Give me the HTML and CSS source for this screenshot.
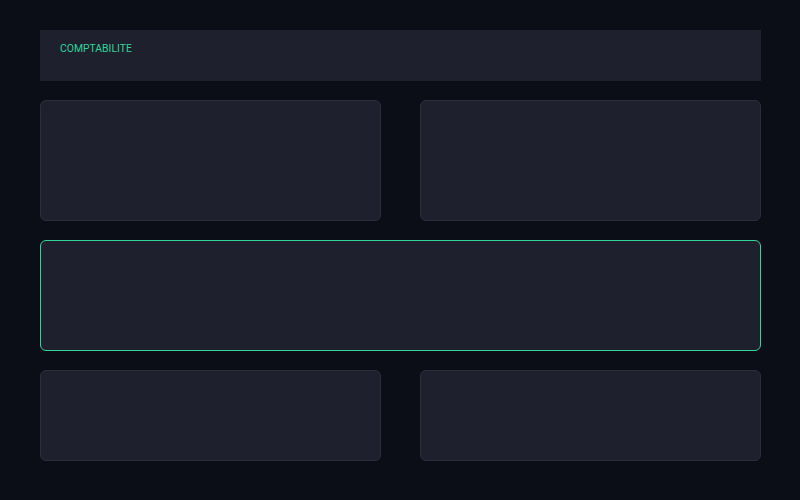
FILE: index.html
```html
<!DOCTYPE html>
<html lang="fr">
<head>
  <meta charset="UTF-8">
  <meta name="viewport" content="width=device-width, initial-scale=1.0">
  <title>Comptabilite</title>
  <link rel="stylesheet" href="styles.css">
</head>
<body>
  <div class="page">
    <header class="top-bar">
      <span class="section-title">COMPTABILITE</span>
    </header>
    <div class="grid-row row-tall">
      <div class="card"></div>
      <div class="card"></div>
    </div>
    <div class="card card-active row-mid"></div>
    <div class="grid-row row-short">
      <div class="card"></div>
      <div class="card"></div>
    </div>
  </div>
</body>
</html>
```
FILE: styles.css
```css
html, body {
  margin: 0;
  height: 100%;
}
body {
  background: #0b0e17;
  font-family: Roboto, "Liberation Sans", Arial, sans-serif;
  color: #e5e7eb;
}
.page {
  padding: 30px 39px 30px 40px;
  display: flex;
  flex-direction: column;
  gap: 19px;
}
.top-bar {
  height: 51px;
  background: #1e212d;
  padding: 13px 20px 0;
  box-sizing: border-box;
  display: flex;
  align-items: flex-start;
}
.section-title {
  font-size: 10.4px;
  line-height: 12px;
  color: #34d399;
}
.grid-row {
  display: grid;
  grid-template-columns: 1fr 1fr;
  gap: 39px;
}
.card {
  background: #1e212d;
  border: 1px solid #2b2f3b;
  border-radius: 6px;
  box-sizing: border-box;
}
.card-active {
  border-color: #34d399;
}
.row-tall .card {
  height: 121px;
}
.row-mid {
  height: 111px;
}
.row-short .card {
  height: 91px;
}
```
